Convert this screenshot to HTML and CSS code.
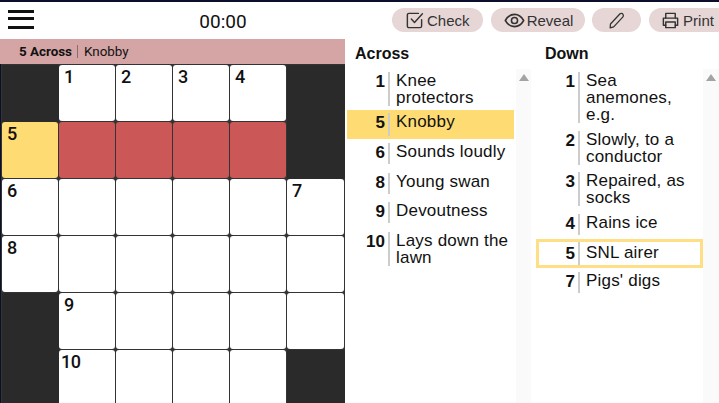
FILE: index.html
```html
<!DOCTYPE html>
<html lang="en">
<head>
<meta charset="utf-8">
<title>Crossword</title>
<link rel="stylesheet" href="styles.css">
</head>
<body>
<div class="app">
  <header class="topbar">
    <div class="left-bar">
      <div class="burger"><span></span><span></span><span></span></div>
      <div class="timer">00:00</div>
    </div>
    <div class="actions">
      <button class="pill pill-check"><svg viewBox="0 0 24 24" class="ico"><path d="M21 11v8a2 2 0 0 1-2 2H5a2 2 0 0 1-2-2V5a2 2 0 0 1 2-2h12"/><path d="M8 10l4 4.500L22 3.500"/></svg>Check</button>
      <button class="pill pill-reveal"><svg viewBox="0 0 24 24" class="ico ico-eye"><path d="M1.500 12C4 7.500 7.700 5 12 5s8 2.500 10.500 7c-2.500 4.500-6.200 7-10.500 7s-8-2.500-10.500-7z"/><circle cx="12" cy="12" r="3.500"/></svg>Reveal</button>
      <button class="pill pill-pencil"><svg viewBox="0 0 24 24" class="ico ico-lg"><path d="M17 2.500c1.500-1 3.500-.5 4.300 1 .7 1.300.4 2.700-.5 3.800L8 21l-5 1.500.5-5.500z"/></svg></button>
      <button class="pill pill-print"><svg viewBox="0 0 24 24" class="ico"><path d="M6 9V3h12v6"/><path d="M6 18H3v-9h18v9h-3"/><path d="M6 14h12v7H6z"/></svg>Print</button>
    </div>
  </header>
  <main class="body">
    <section class="board">
      <div class="banner"><b class="banner-num">5 Across</b><span class="banner-text">Knobby</span></div>
      <div class="grid">
        <div class="cell black"></div><div class="cell"><i>1</i></div><div class="cell"><i>2</i></div><div class="cell"><i>3</i></div><div class="cell"><i>4</i></div><div class="cell black"></div>
        <div class="cell active"><i>5</i></div><div class="cell word"></div><div class="cell word"></div><div class="cell word"></div><div class="cell word"></div><div class="cell black"></div>
        <div class="cell"><i>6</i></div><div class="cell"></div><div class="cell"></div><div class="cell"></div><div class="cell"></div><div class="cell"><i>7</i></div>
        <div class="cell"><i>8</i></div><div class="cell"></div><div class="cell"></div><div class="cell"></div><div class="cell"></div><div class="cell"></div>
        <div class="cell black"></div><div class="cell"><i>9</i></div><div class="cell"></div><div class="cell"></div><div class="cell"></div><div class="cell"></div>
        <div class="cell black"></div><div class="cell"><i class="tight">10</i></div><div class="cell"></div><div class="cell"></div><div class="cell"></div><div class="cell black"></div>
      </div>
    </section>
    <section class="clues">
      <div class="clue-col col-across">
        <h2>Across</h2>
        <div class="list-wrap">
          <ol class="list">
            <li><b>1</b><span>Knee protectors</span></li>
            <li class="sel"><b>5</b><span>Knobby</span></li>
            <li><b>6</b><span>Sounds loudly</span></li>
            <li><b>8</b><span>Young swan</span></li>
            <li><b>9</b><span>Devoutness</span></li>
            <li><b>10</b><span>Lays down the lawn</span></li>
          </ol>
          <div class="scroll"><div class="arrow"></div></div>
        </div>
      </div>
      <div class="clue-col col-down">
        <h2>Down</h2>
        <div class="list-wrap">
          <ol class="list">
            <li><b>1</b><span>Sea anemones, e.g.</span></li>
            <li><b>2</b><span>Slowly, to a conductor</span></li>
            <li><b>3</b><span>Repaired, as socks</span></li>
            <li><b>4</b><span>Rains ice</span></li>
            <li class="cross"><b>5</b><span>SNL airer</span></li>
            <li><b>7</b><span>Pigs' digs</span></li>
          </ol>
          <div class="scroll"><div class="arrow"></div></div>
        </div>
      </div>
    </section>
  </main>
</div>
</body>
</html>
```
FILE: styles.css
```css
* { box-sizing: border-box; }
html, body { margin: 0; padding: 0; height: 100%; overflow: hidden; }
body { background: #fff; font-family: "Liberation Sans", Arial, sans-serif; color: #111; }
.app { width: 719px; height: 403px; display: flex; flex-direction: column; border-top: 2px solid #0b0f2c; overflow: hidden; }
.topbar { height: 37px; display: flex; flex: none; background: #fff; }
.left-bar { width: 345px; flex: none; display: flex; align-items: center; padding-left: 8px; }
.burger { width: 26px; display: flex; flex-direction: column; margin-top: -2px; }
.burger span { display: block; height: 3px; background: #111; }
.burger span + span { margin-top: 4px; }
.burger span:last-child { margin-top: 6px; }
.timer { width: 70px; margin-left: 154px; text-align: center; font: 19px "Roboto", sans-serif; color: #111; margin-top: 1px; }
.actions { display: flex; align-items: center; gap: 7.700px; padding-left: 47px; white-space: nowrap; margin-top: -1px; }
.pill { height: 24px; border: 0; border-radius: 12px; background: #e6d6d6; color: #333; font: 15px "Liberation Sans", Arial, sans-serif; display: flex; align-items: center; justify-content: flex-start; padding: 0; flex: none; }
.pill-check { width: 91px; padding-left: 13px; }
.pill-reveal { width: 94px; padding-left: 13px; }
.pill-pencil { width: 49px; justify-content: center; }
.pill-print { width: 80px; padding-left: 12px; }
.ico { width: 19px; height: 19px; fill: none; stroke: #333; stroke-width: 1.800; stroke-linecap: round; stroke-linejoin: round; margin-right: 3px; flex: none; }
.ico-eye { width: 21px; height: 21px; margin-right: 2px; }
.ico-lg { width: 17px; height: 17px; margin: 0; }
.body { flex: 1; display: flex; min-height: 0; }
.board { width: 345px; flex: none; display: flex; flex-direction: column; }
.banner { height: 25px; flex: none; background: #d5a5a5; display: flex; align-items: center; font: 13.400px "Roboto", sans-serif; color: #111; padding-left: 19px; }
.banner-num { font-weight: 700; padding-right: 5px; border-right: 1px solid #8a6a6a; line-height: 13px; }
.banner-text { padding-left: 6px; }
.grid { flex: 1; min-height: 0; display: grid; grid-template-columns: 57px 57px 57px 57px 57px 58px; grid-auto-rows: 57px; padding: 1px 1px 0 1px; border-left: 1px solid #0b0f2c; align-content: start; background: #333; }
.cell { background: #fff; border-radius: 3px; margin: 0 1.500px 1.500px 0; position: relative; }
.cell i { position: absolute; left: 5px; top: 1px; font: 500 18px/22px "Roboto", sans-serif; color: #111; }
.cell i.tight { left: 2px; letter-spacing: -0.5px; }
.black { background: #2a2a2a; border-radius: 0; margin: 0; }
.active { background: #ffdc73; }
.word { background: #cc5757; }
.clues { flex: 1; display: flex; min-width: 0; background: #fff; }
.clue-col { display: flex; flex-direction: column; flex: none; }
.col-across { width: 186px; padding-left: 2px; }
.col-down { width: 188px; }
.clue-col h2 { margin: 0; font-size: 16px; font-weight: 700; line-height: 18px; padding-top: 6px; height: 30px; color: #111; }
.col-across h2 { padding-left: 8px; }
.col-down h2 { padding-left: 14px; }
.list-wrap { flex: 1; display: flex; min-height: 0; }
.list { list-style: none; margin: 0; padding: 3px 0 0; width: 167px; flex: none; }
.col-down .list { width: 172px; }
.col-across .scroll { margin-left: 2px; width: 15px; }
.col-down .scroll { width: 16px; }
.scroll { background: #fafafa; position: relative; flex: none; }
.arrow { position: absolute; left: 3px; top: 5px; width: 0; height: 0; border-left: 5px solid transparent; border-right: 5px solid transparent; border-bottom: 7px solid #a3a3a3; }
.list li { display: flex; min-height: 21px; margin-bottom: 7.500px; font-size: 17px; line-height: 17px; letter-spacing: 0.2px; }
.col-across .list li { margin-bottom: 8.500px; }
.list li b { width: 43px; flex: none; text-align: right; padding-right: 3px; border-right: 2px solid #ccc; font-size: 17px; line-height: 19px; margin-right: 6px; letter-spacing: 0; }
.list li span { flex: 1; min-width: 0; padding-right: 0; }
.col-down .list li b { width: 49px; }
.col-down .list li span { padding-right: 14px; }
.col-across .list li.sel { background: #ffdc73; height: 29px; margin-top: -4.500px; margin-bottom: 4px; padding: 3px 0 3px; }
.col-down .list li.cross { box-shadow: inset 0 0 0 3px #ffdf85; height: 29px; margin-top: -3.500px; margin-bottom: 4px; margin-left: 5px; padding: 3px 0 3px; }
.col-down .list li.cross b { width: 44px; line-height: 24px; }
.col-down .list li.cross span { padding-top: 2px; }
```
